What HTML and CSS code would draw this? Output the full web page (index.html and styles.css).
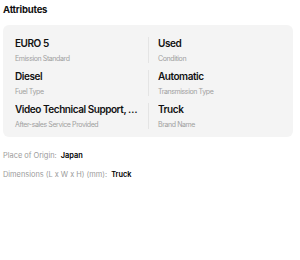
FILE: index.html
```html
<!DOCTYPE html>
<html lang="en">
<head>
  <meta charset="UTF-8" />
  <title>Attributes</title>
  <link rel="stylesheet" href="styles.css">
</head>
<body>
  <div class="attrs">
    <h3 class="attrs-title">Attributes</h3>
    <div class="attrs-card">
      <div class="attr">
        <div class="attr-value">EURO 5</div>
        <div class="attr-label">Emission Standard</div>
      </div>
      <div class="attr">
        <div class="attr-value">Used</div>
        <div class="attr-label">Condition</div>
      </div>
      <div class="attr">
        <div class="attr-value">Diesel</div>
        <div class="attr-label">Fuel Type</div>
      </div>
      <div class="attr">
        <div class="attr-value">Automatic</div>
        <div class="attr-label">Transmission Type</div>
      </div>
      <div class="attr">
        <div class="attr-value">Video Technical Support, Online Support</div>
        <div class="attr-label">After-sales Service Provided</div>
      </div>
      <div class="attr">
        <div class="attr-value">Truck</div>
        <div class="attr-label">Brand Name</div>
      </div>
    </div>
    <div class="extra">
      <p><span class="extra-label">Place of Origin:</span> <b>Japan</b></p>
      <p><span class="extra-label">Dimensions (L x W x H) (mm):</span> <b>Truck</b></p>
    </div>
  </div>
</body>
</html>
```
FILE: styles.css
```css
body {
  margin: 0;
  font-family: 'Inter', 'Noto Sans', sans-serif;
  background: #fff;
  color: #111;
}
.attrs {
  padding: 0 7px 0 3px;
}
.attrs-title {
  margin: 0;
  padding-top: 4px;
  font-size: 9.5px;
  font-weight: 700;
  line-height: 12px;
  letter-spacing: -0.2px;
}
.attrs-card {
  margin-top: 9px;
  background: #f4f4f4;
  border-radius: 6px;
  padding: 12px 12px 8px;
  display: grid;
  grid-template-columns: 1fr 1fr;
  row-gap: 7px;
}
.attr {
  min-width: 0;
}
.attr:nth-child(even) {
  border-left: 1px solid #e4e4e4;
  padding-left: 9px;
}
.attr-value {
  font-size: 10px;
  font-weight: 600;
  line-height: 13px;
  letter-spacing: -0.45px;
  white-space: nowrap;
  overflow: hidden;
  text-overflow: ellipsis;
  padding-right: 8px;
}
.attr-label {
  margin-top: 4px;
  font-size: 7px;
  line-height: 9px;
  letter-spacing: -0.4px;
  color: #a0a0a0;
}
.extra {
  margin-top: 14px;
  font-size: 7.4px;
}
.extra p {
  margin: 0 0 9px;
  line-height: 10px;
}
.extra-label {
  color: #9a9a9a;
  margin-right: 2px;
}
.extra b {
  font-weight: 600;
  color: #000;
}
```
